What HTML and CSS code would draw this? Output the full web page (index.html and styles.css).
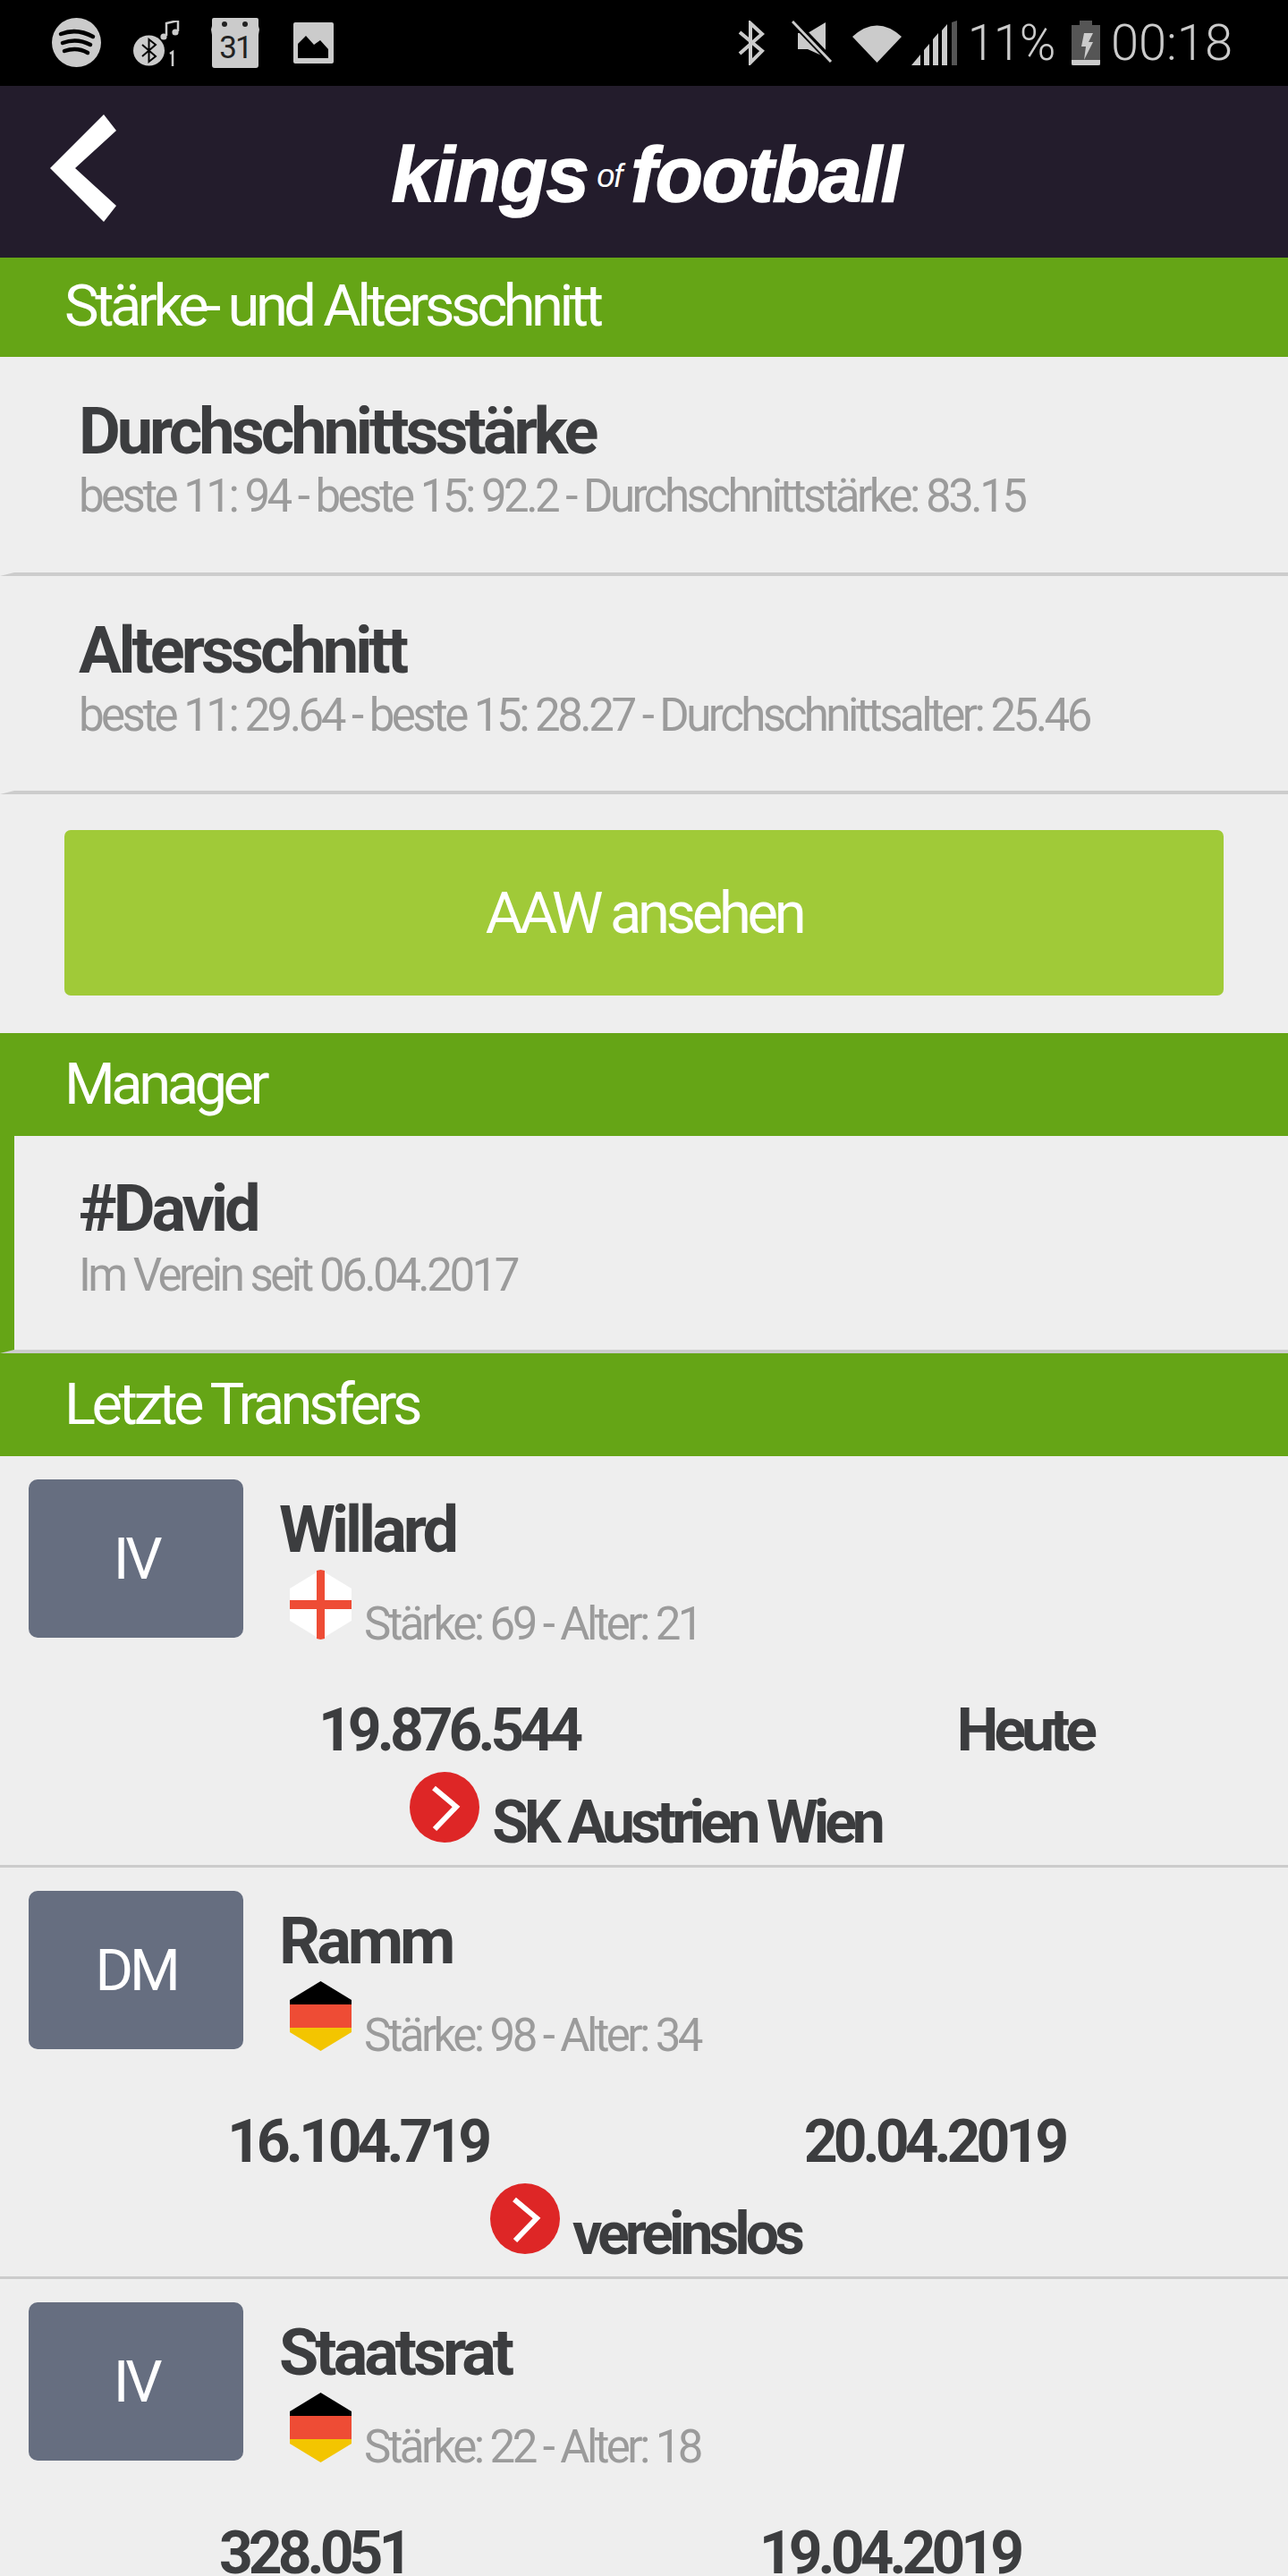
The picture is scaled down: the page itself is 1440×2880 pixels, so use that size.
FILE: index.html

```html
<!DOCTYPE html>
<html lang="de">
<head>
  <meta charset="UTF-8" />
  <meta name="viewport" content="width=device-width, initial-scale=1.0"/>
  <title>Kings of Football</title>
  <link rel="stylesheet" href="styles.css">
</head>
<body>

  <div class="status-bar">
    <div class="status-left">
      <svg class="ic-spotify" width="55" height="55" viewBox="0 0 55 55">
        <circle cx="27.5" cy="27.5" r="27.5" fill="#cbcbcb"/>
        <path d="M10 18 Q28 11 46 21 M12 28 Q28 22 43 30 M14 37 Q28 32 40 39" fill="none" stroke="#000" stroke-width="4.5" stroke-linecap="round"/>
      </svg>
      <svg class="ic-btmusic" width="52" height="52" viewBox="0 0 52 52">
        <ellipse cx="17.5" cy="33.5" rx="17.5" ry="17" fill="#cbcbcb"/>
        <path d="M10 27 L25 40 L17.5 46 V21 L25 27 L10 40" fill="none" stroke="#000" stroke-width="2"/>
        <path d="M37 17 V3 L50 0 V12" fill="none" stroke="#cbcbcb" stroke-width="2.5"/>
        <circle cx="34" cy="18" r="3.6" fill="#cbcbcb"/>
        <circle cx="47" cy="13" r="3.6" fill="#cbcbcb"/>
        <path d="M41 37 L44 35 V51" fill="none" stroke="#cbcbcb" stroke-width="2.5"/>
      </svg>
      <svg class="ic-calendar" width="54" height="56" viewBox="0 0 54 56">
        <path d="M3 0 H51 Q53 0 53 2 V9 L54 13 L53 19 V53 Q53 56 50 56 H4 Q1 56 1 53 V19 L0 13 L1 9 V2 Q1 0 3 0 Z" fill="#cbcbcb"/>
        <circle cx="15" cy="7" r="3" fill="#222"/>
        <circle cx="38" cy="7" r="3" fill="#222"/>
        <text class="cal-day" x="27" y="45" text-anchor="middle">31</text>
      </svg>
      <svg class="ic-image" width="45" height="46" viewBox="0 0 45 46">
        <rect width="45" height="46" rx="2" fill="#cbcbcb"/>
        <path d="M5 40 V24 L14 15 L23 25 L30 20 L39 30 V40 Z" fill="#000"/>
      </svg>
    </div>
    <div class="status-right">
      <svg class="ic-bt" width="30" height="50" viewBox="0 0 30 50">
        <path d="M2 13 L27 34 L14 47 V3 L27 15 L2 37" fill="none" stroke="#cbcbcb" stroke-width="4"/>
      </svg>
      <svg class="ic-mute" width="47" height="47" viewBox="0 0 47 47">
        <path d="M38 2 V41 L18 32 H7 V14 H18 Z" fill="#cbcbcb"/>
        <path d="M2 1 L45 46" stroke="#000" stroke-width="8"/>
        <path d="M1 1 L44 46" stroke="#cbcbcb" stroke-width="3"/>
      </svg>
      <svg class="ic-wifi" width="55" height="44" viewBox="0 0 55 44">
        <path d="M0 15 Q27.5 -10 55 15 L27.5 44 Z" fill="#cbcbcb"/>
      </svg>
      <svg class="ic-signal" width="51" height="50" viewBox="0 0 51 50">
        <path d="M0 50 L10 38 V50 Z M14 50 V33 L20 26 V50 Z M24 50 V21 L30 14 V50 Z" fill="#cbcbcb"/>
        <path d="M34 50 V11 L40 4 V50 Z" fill="#cbcbcb"/>
        <path d="M45 50 V2 L51 0 V50 Z" fill="#555"/>
      </svg>
      <span class="status-text pct">11%</span>
      <svg class="ic-battery" width="32" height="50" viewBox="0 0 32 50">
        <path d="M9 0 H23 V5 H32 V50 H0 V5 H9 Z" fill="#555"/>
        <path d="M0 44 H32 V48 Q32 50 30 50 H2 Q0 50 0 48 Z" fill="#cbcbcb"/>
        <path d="M14 14 H24 L19 24 H24 L14 44 L16 29 H11 Z" fill="#cbcbcb"/>
      </svg>
      <span class="status-text clock">00:18</span>
    </div>
  </div>

  <header class="app-header">
    <svg class="back" width="74" height="120" viewBox="0 0 74 120">
      <path d="M60 0 L74 18 L28 60 L74 102 L60 120 L0 60 Z" fill="#fff" />
    </svg>
    <div class="logo"><span>kings</span><span class="logo-of">of</span><span>football</span></div>
  </header>

  <div class="section-head first">Stärke- und Altersschnitt</div>

  <div class="info-row">
    <div class="row-title">Durchschnittsstärke</div>
    <div class="row-sub">beste 11: 94 - beste 15: 92.2 - Durchschnittstärke: 83.15</div>
  </div>
  <div class="info-row">
    <div class="row-title">Altersschnitt</div>
    <div class="row-sub">beste 11: 29.64 - beste 15: 28.27 - Durchschnittsalter: 25.46</div>
  </div>

  <div class="btn-wrap">
    <button class="btn">AAW ansehen</button>
  </div>

  <div class="section-head">Manager</div>
  <div class="info-row manager">
    <div class="row-title">#David</div>
    <div class="row-sub">Im Verein seit 06.04.2017</div>
  </div>

  <div class="section-head">Letzte Transfers</div>

  <div class="transfer">
    <div class="player">
      <div class="pos">IV</div>
      <div class="player-info">
        <div class="name">Willard</div>
        <div class="player-meta">
          <svg class="flag" width="69" height="78" viewBox="0 0 69 78">
            <path d="M34.5 0 L69 21 V57 L34.5 78 L0 57 V21 Z" fill="#fff"/>
            <path d="M30 1 L34.5 0 L39 1 V77 L34.5 78 L30 77 Z M0 34 H69 V44 H0 Z" fill="#ee4c35"/>
          </svg>
          <span class="meta-text">Stärke: 69 - Alter: 21</span>
        </div>
      </div>
    </div>
    <div class="values v1"><span>19.876.544</span><span>Heute</span></div>
    <div class="dest">
      <svg class="arrow" width="78" height="79" viewBox="0 0 78 79">
        <ellipse cx="39" cy="39.5" rx="39" ry="39.5" fill="#de2626"/>
        <path d="M27 18 L52 39 L28 64" fill="none" stroke="#fff" stroke-width="6"/>
      </svg>
      <span>SK Austrien Wien</span>
    </div>
  </div>

  <div class="transfer">
    <div class="player">
      <div class="pos">DM</div>
      <div class="player-info">
        <div class="name">Ramm</div>
        <div class="player-meta">
          <svg class="flag" width="69" height="78" viewBox="0 0 69 78">
            <path d="M34.5 0 L69 21 V26 H0 V21 Z" fill="#000"/>
            <rect y="26" width="69" height="26" fill="#ee4c35"/>
            <path d="M0 52 H69 V57 L34.5 78 L0 57 Z" fill="#f3c500"/>
          </svg>
          <span class="meta-text">Stärke: 98 - Alter: 34</span>
        </div>
      </div>
    </div>
    <div class="values v2"><span>16.104.719</span><span>20.04.2019</span></div>
    <div class="dest">
      <svg class="arrow" width="78" height="79" viewBox="0 0 78 79">
        <ellipse cx="39" cy="39.5" rx="39" ry="39.5" fill="#de2626"/>
        <path d="M27 18 L52 39 L28 64" fill="none" stroke="#fff" stroke-width="6"/>
      </svg>
      <span>vereinslos</span>
    </div>
  </div>

  <div class="transfer">
    <div class="player">
      <div class="pos">IV</div>
      <div class="player-info">
        <div class="name">Staatsrat</div>
        <div class="player-meta">
          <svg class="flag" width="69" height="78" viewBox="0 0 69 78">
            <path d="M34.5 0 L69 21 V26 H0 V21 Z" fill="#000"/>
            <rect y="26" width="69" height="26" fill="#ee4c35"/>
            <path d="M0 52 H69 V57 L34.5 78 L0 57 Z" fill="#f3c500"/>
          </svg>
          <span class="meta-text">Stärke: 22 - Alter: 18</span>
        </div>
      </div>
    </div>
    <div class="values v3"><span>328.051</span><span>19.04.2019</span></div>
  </div>

</body>
</html>
```

FILE: styles.css

```css
html, body {
  margin: 0;
  padding: 0;
}
body {
  width: 1440px;
  height: 2880px;
  overflow: hidden;
  background: #eeeeee;
  font-family: Roboto, Arial, sans-serif;
  color: #3c3d3f;
}

/* status bar */
.status-bar {
  height: 96px;
  background: #000;
  display: flex;
  justify-content: space-between;
  padding: 0 62px 0 58px;
  box-sizing: border-box;
}
.status-left, .status-right {
  display: flex;
  align-items: flex-start;
}
.status-bar svg {
  display: block;
  flex: none;
}
.ic-spotify { margin-top: 20px; }
.ic-btmusic { margin: 23px 0 0 36px; }
.ic-calendar { margin: 20px 0 0 35px; }
.cal-day {
  fill: #222;
  font-size: 35px;
  letter-spacing: -2px;
}
.ic-image { margin: 25px 0 0 38px; }
.ic-bt { margin-top: 23px; }
.ic-mute { margin: 23px 0 0 30px; }
.ic-wifi { margin: 26px 0 0 21px; }
.ic-signal { margin: 23px 0 0 11px; }
.status-text {
  color: #cbcbcb;
  font-size: 55px;
  font-weight: 300;
  line-height: 54px;
  margin-top: 21px;
}
.pct {
  margin-left: 12px;
  letter-spacing: -1.5px;
}
.ic-battery { margin: 23px 0 0 19px; }
.clock {
  font-size: 56px;
  margin-left: 12px;
}

/* header */
.app-header {
  height: 192px;
  background: #231c2c;
  position: relative;
  display: flex;
  justify-content: center;
  align-items: flex-start;
}
.back {
  position: absolute;
  left: 56px;
  top: 32px;
}
.logo {
  display: flex;
  align-items: baseline;
  color: #fff;
  font-family: "Liberation Sans", Arial, sans-serif;
  font-weight: bold;
  font-style: italic;
  font-size: 87px;
  line-height: 100px;
  letter-spacing: -1.5px;
  -webkit-text-stroke: 1.5px #fff;
  margin-top: 49px;
  padding-left: 5px;
}
.logo-of {
  align-self: flex-start;
  font-size: 36px;
  font-weight: normal;
  line-height: 40px;
  letter-spacing: -1px;
  -webkit-text-stroke: 0;
  margin: 32px 10px 0;
}

/* sections */
.section-head {
  height: 115px;
  background: #65a516;
  color: #fff;
  font-size: 65px;
  line-height: 114px;
  letter-spacing: -4.45px;
  padding-left: 72px;
  box-sizing: border-box;
}
.section-head.first {
  height: 111px;
  line-height: 108px;
}
.info-row {
  height: 244.5px;
  box-sizing: border-box;
  padding: 44px 0 0 72px;
  border-left: 16px solid transparent;
  border-bottom: 4px solid #cccccc;
}
.row-title {
  font-size: 72px;
  font-weight: 700;
  line-height: 80px;
  letter-spacing: -4px;
}
.row-sub {
  font-size: 51px;
  line-height: 60px;
  margin-top: 2px;
  color: #9b9b9b;
  letter-spacing: -3.53px;
}
.manager {
  border-left-color: #65a516;
  padding-top: 42px;
  height: 243px;
}
.manager .row-sub {
  margin-top: 4px;
}

.btn-wrap {
  padding: 40px 72px 42px;
}
.btn {
  display: block;
  width: 100%;
  height: 185px;
  background: #a0ca38;
  border: none;
  border-radius: 7px;
  color: #fff;
  font-family: Roboto, Arial, sans-serif;
  font-size: 65px;
  letter-spacing: -4.3px;
}

/* transfer rows */
.transfer {
  height: 460px;
  box-sizing: border-box;
  padding-top: 26px;
  border-bottom: 3px solid #cccccc;
}
.player {
  display: flex;
  align-items: flex-start;
  height: 192px;
  padding-left: 32px;
  gap: 40px;
}
.pos {
  width: 240px;
  height: 177px;
  flex: none;
  background: #666e80;
  border-radius: 10px;
  color: #fff;
  font-size: 65px;
  letter-spacing: -4.3px;
  display: flex;
  justify-content: center;
  align-items: center;
}
.player-info {
  padding-top: 17px;
}
.name {
  font-size: 72px;
  font-weight: 700;
  line-height: 80px;
  letter-spacing: -4px;
}
.player-meta {
  display: flex;
  align-items: baseline;
  margin: 4px 0 0 12px;
  gap: 14px;
}
.flag {
  display: block;
}
.meta-text {
  font-size: 51px;
  line-height: 60px;
  color: #9b9b9b;
  letter-spacing: -3.6px;
}
.values {
  display: flex;
  justify-content: space-between;
  margin-top: 51px;
  font-size: 66px;
  font-weight: 700;
  line-height: 76px;
  letter-spacing: -5px;
}
.v1 { padding: 0 218px 0 356px; }
.v2 { padding: 0 250px 0 254px; }
.v3 { padding: 0 300px 0 245px; }
.dest {
  display: flex;
  justify-content: center;
  align-items: baseline;
  gap: 14px;
  margin-top: 8px;
  padding-left: 3px;
  font-size: 66px;
  font-weight: 700;
  line-height: 76px;
  letter-spacing: -5px;
}
.arrow {
  display: block;
}
```
